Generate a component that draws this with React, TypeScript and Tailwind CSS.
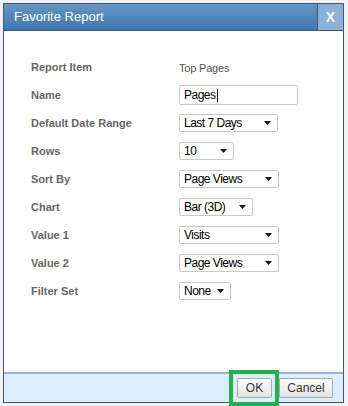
import React from "react";

function Sel({ label, w }: { label: string; w: number }) {
  return (
    <div
      className="flex items-center justify-between gap-[6px] h-[18px] border border-[#c8c8c8] rounded-[2px] bg-white pl-[4px] pr-[6px] text-[12px] tracking-[-0.5px] text-black"
      style={{ width: w }}
    >
      <span className="leading-none whitespace-nowrap">{label}</span>
      <svg width="7" height="4" viewBox="0 0 7 4" className="shrink-0">
        <polygon points="0,0 7,0 3.5,4" fill="#111" />
      </svg>
    </div>
  );
}

export default function App() {
  const rows: [string, React.ReactNode][] = [
    ["Report Item", <span className="text-[11px] text-[#555] tracking-[-0.2px]">Top Pages</span>],
    [
      "Name",
      <div className="w-[119px] h-[20px] border border-[#c8c8c8] rounded-[2px] bg-white flex items-center pl-[4px] text-[12px] tracking-[-0.5px] text-black">
        Pages<span className="w-px h-[13px] bg-black ml-px" />
      </div>,
    ],
    ["Default Date Range", <Sel label="Last 7 Days" w={99} />],
    ["Rows", <Sel label="10" w={55} />],
    ["Sort By", <Sel label="Page Views" w={100} />],
    ["Chart", <Sel label="Bar (3D)" w={74} />],
    ["Value 1", <Sel label="Visits" w={100} />],
    ["Value 2", <Sel label="Page Views" w={100} />],
    ["Filter Set", <Sel label="None" w={52} />],
  ];
  return (
    <div
      className="relative w-[348px] h-[406px] bg-[#f2f2f2] pt-[3px] pl-[3px] overflow-hidden"
      style={{ fontFamily: '"Liberation Sans", Arial, sans-serif' }}
    >
      <div className="w-[341px] h-[400px] border border-[#3e5874] flex flex-col bg-white">
        <div className="h-[27px] flex items-stretch bg-gradient-to-b from-[#6595c2] to-[#3f78b1] border-b border-[#3e5874]">
          <div className="flex-1 flex items-center pl-[10px] text-white text-[13px]">Favorite Report</div>
          <div className="w-[26px] border-l border-[#3e5874] bg-[#8cb1d7] flex items-center justify-center text-white font-bold text-[14px]">
            X
          </div>
        </div>
        <div className="flex-1 pt-[22px] pl-[27px]">
          {rows.map(([l, v], i) => (
            <div key={i} className="grid grid-cols-[148px_1fr] h-[28px] items-center">
              <span className="text-[11px] font-bold text-[#666]">{l}</span>
              <div>{v}</div>
            </div>
          ))}
        </div>
        <div className="h-[30px] border-t-2 border-[#9bb4cc] bg-[#dcedfd] flex items-center justify-end gap-[7px] pr-[10px]">
          <button className="w-[35px] h-[20px] border border-[#aaa] rounded-[2px] bg-gradient-to-b from-white to-[#e3e3e3] text-[12px] text-[#333]">
            OK
          </button>
          <button className="w-[54px] h-[20px] border border-[#aaa] rounded-[2px] bg-gradient-to-b from-white to-[#e3e3e3] text-[12px] text-[#333]">
            Cancel
          </button>
        </div>
      </div>
      <div className="absolute left-[229px] top-[370px] w-[50px] h-[36px] border-[4px] border-[#22b14c]" />
    </div>
  );
}
